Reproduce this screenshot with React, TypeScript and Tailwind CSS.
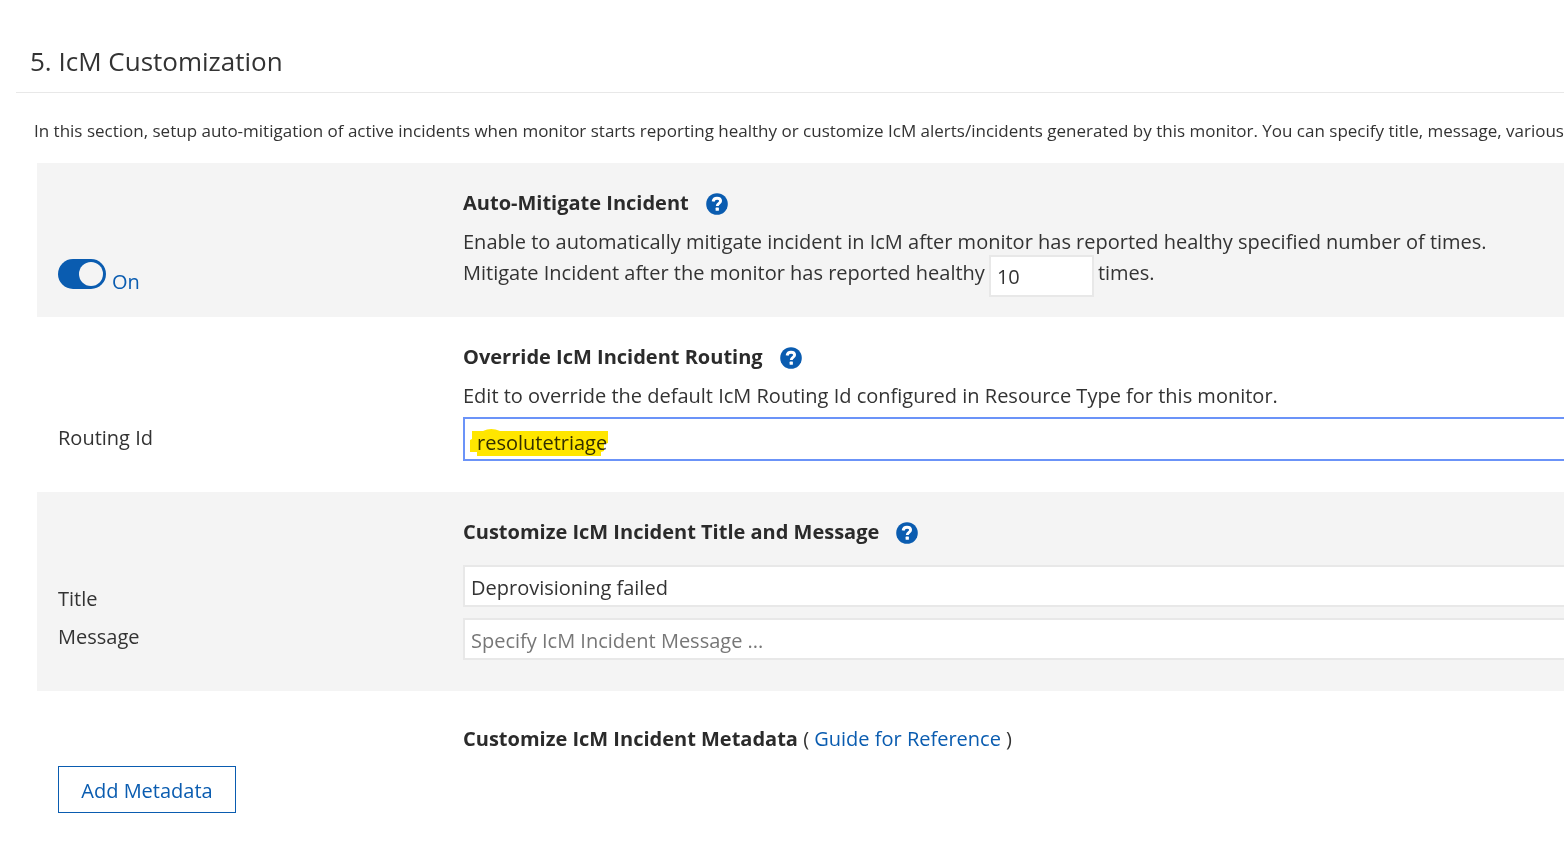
import React from "react";

function Help({ label }: { label: string }) {
  return (
    <button type="button" aria-label={label} className="mt-0.5 ml-[17px] block size-[22px]">
      <svg viewBox="0 0 22 22" className="size-[22px]">
        <circle cx="11" cy="11" r="10.8" fill="#0a5cb0" />
        <path d="M7.1 8.4C7.5 6.2 9 5.2 11 5.2c2.1 0 3.6 1.1 3.6 2.9 0 2.3-3.3 2.3-3.3 4.8" fill="none" stroke="#fff" strokeWidth="2.9" />
        <rect x="9.6" y="14.6" width="3.3" height="3.2" rx="0.6" fill="#fff" />
      </svg>
    </button>
  );
}

function Heading({ children }: { children: string }) {
  return (
    <div className="flex h-[30px] items-center">
      <h2 className="text-[20px] leading-[30px] font-bold text-[#2b2b2b]">{children}</h2>
      <Help label={"Help: " + children} />
    </div>
  );
}

const row = "grid grid-cols-[405px_minmax(0,1fr)] pl-[21px]";
const field = "block h-[42px] w-full border-2 border-r-0 border-[#e8e8e8] bg-white px-1.5 pt-0.5 text-[20px] text-[#333] outline-none placeholder:text-[#777]";

export default function App() {
  return (
    <main className="overflow-hidden bg-white pb-8 font-['Open_Sans','Noto_Sans',sans-serif] text-[20px] text-[#333]">
      <header className="ml-4 border-b border-[#e8e8e8] px-[14px] pt-[41px] pb-[11px]">
        <h1 className="text-[26px] leading-10 text-[#333]">5. IcM Customization</h1>
      </header>
      <p className="pt-[23px] pb-[18px] pl-[34px] text-[17px] leading-[29px] whitespace-nowrap">
        In this section, setup auto-mitigation of active incidents when monitor starts reporting healthy or customize IcM alerts/incidents generated by this monitor. You can specify title, message, various
      </p>
      <div className="pl-[37px]">
        <section className={row + " h-[154px] bg-[#f4f4f4]"}>
          <label className="flex items-start pt-24 text-[#0a5cb0]">
            <input type="checkbox" role="switch" defaultChecked className="peer sr-only" />
            <span className="flex h-[30px] w-12 justify-end rounded-full bg-[#0a5cb0] p-[3px]">
              <span className="size-6 rounded-full bg-[#f4f4f4]" />
            </span>
            <span className="pt-2 pl-1.5 leading-[30px]">On</span>
          </label>
          <div className="pt-[25px] whitespace-nowrap">
            <Heading>Auto-Mitigate Incident</Heading>
            <p className="pt-[9px] leading-[30px]">Enable to automatically mitigate incident in IcM after monitor has reported healthy specified number of times.</p>
            <div className="flex items-start leading-[30px]">
              <label htmlFor="count" className="pt-px">Mitigate Incident after the monitor has reported healthy</label>
              <input id="count" defaultValue="10" className="-mt-0.5 mx-1 h-[42px] w-[105px] border-2 border-[#e8e8e8] bg-white px-1.5 outline-none" />
              <span className="pt-px">times.</span>
            </div>
          </div>
        </section>
        <section className={row + " h-[175px]"}>
          <label htmlFor="routing" className="pt-[106px] leading-[30px]">Routing Id</label>
          <div className="pt-[25px]">
            <Heading>Override IcM Incident Routing</Heading>
            <p className="pt-[9px] leading-[30px]">Edit to override the default IcM Routing Id configured in Resource Type for this monitor.</p>
            <div className="relative mt-1.5">
              <input id="routing" defaultValue="resolutetriage" className="block h-11 w-full border-2 border-r-0 border-[#6b93f8] bg-white px-3 pt-1.5 outline-none" />
              <svg viewBox="0 0 140 28" className="pointer-events-none absolute top-3 left-[6px] h-7 w-[140px] mix-blend-multiply">
                <path d="M3 2h11Q22-2 31 2h108v12l-4 1v7l-3 1v4H8v-4H1V11l2-1z" fill="#ffe600" />
              </svg>
            </div>
          </div>
        </section>
        <section className={row + " h-[199px] bg-[#f4f4f4]"}>
          <div className="flex flex-col gap-2 pt-[92px] leading-[30px]">
            <label htmlFor="title">Title</label>
            <label htmlFor="message">Message</label>
          </div>
          <div className="pt-[25px]">
            <Heading>Customize IcM Incident Title and Message</Heading>
            <div className="flex flex-col gap-[11px] pt-[18px]">
              <input id="title" defaultValue="Deprovisioning failed" className={field} />
              <input id="message" placeholder="Specify IcM Incident Message ..." className={field} />
            </div>
          </div>
        </section>
        <section className={row + " pt-[33px]"}>
          <button type="button" className="mt-[42px] h-[47px] w-[178px] border border-[#0a5cb0] pt-0.5 text-[#0a5cb0]">Add Metadata</button>
          <p className="leading-[30px]">
            <strong className="font-bold text-[#2b2b2b]">Customize IcM Incident Metadata</strong> ( <a href="#guide" className="text-[#0a5cb0]">Guide for Reference</a> )
          </p>
        </section>
      </div>
    </main>
  );
}
